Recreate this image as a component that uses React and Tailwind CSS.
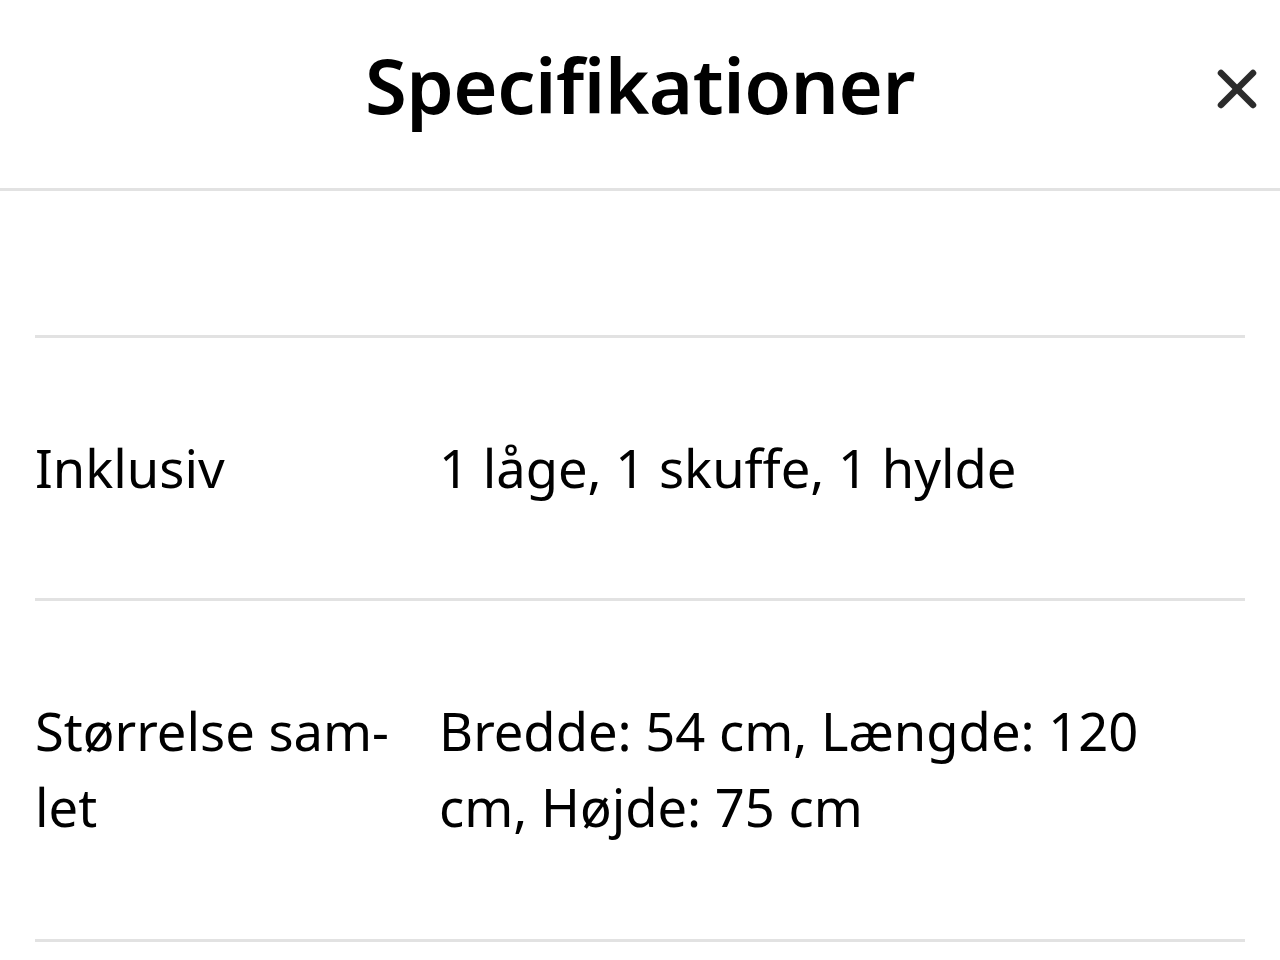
import React from 'react';

// ── Data ────────────────────────────────────────────────
const SPECS = [
  { label: 'Inklusiv', value: '1 låge, 1 skuffe, 1 hylde' },
  { label: 'Størrelse sam\u00ADlet', value: 'Bredde: 54 cm, Længde: 120 cm, Højde: 75 cm' },
];

function CloseIcon() {
  return (
    <svg width="40" height="40" viewBox="0 0 40 40" fill="none" stroke="#2b2b2b" strokeWidth="6.5" strokeLinecap="round">
      <line x1="4" y1="4" x2="36" y2="36" />
      <line x1="36" y1="4" x2="4" y2="36" />
    </svg>
  );
}

export default function App() {
  return (
    <div className="min-h-[960px] w-[1280px] bg-white text-black" style={{ fontFamily: '"Noto Sans", "Open Sans", sans-serif' }}>
      {/* ── Header ───────────────────────────── */}
      <div className="relative flex h-[191px] items-center justify-center border-b-[3px] border-[#e2e2e2] pb-[18px]">
        <h1 className="text-[76px] font-semibold leading-none tracking-[-0.5px]">Specifikationer</h1>
        <button className="absolute right-[23px] top-[69px]" aria-label="Luk">
          <CloseIcon />
        </button>
      </div>

      {/* ── Rows ─────────────────────────────── */}
      <div className="px-[35px]">
        <div className="h-[147px] border-b-[3px] border-[#e2e2e2]" />
        {SPECS.map((row) => (
          <div
            key={row.value}
            className="flex border-b-[3px] border-[#e2e2e2] py-[92px] text-[52.5px] leading-[76px] last:pb-[94px]"
          >
            <div className="w-[404px] shrink-0 pr-[30px]" style={{ hyphens: 'manual' }}>{row.label}</div>
            <div className="flex-1 pr-[20px]">{row.value}</div>
          </div>
        ))}
      </div>
    </div>
  );
}
